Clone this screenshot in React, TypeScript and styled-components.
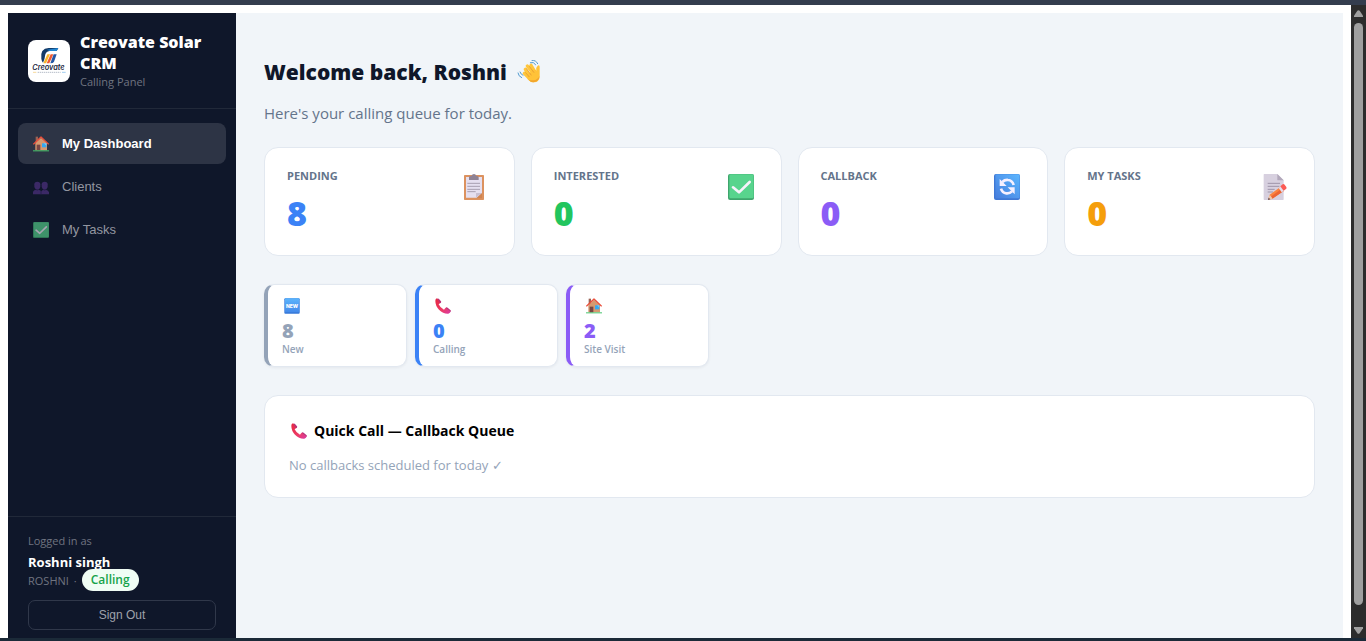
import React from "react";
import styled, { createGlobalStyle } from "styled-components";

const ui = `"Open Sans", "Noto Sans", sans-serif`;
const arial = `"Liberation Sans", Arial, sans-serif`;

const GlobalStyle = createGlobalStyle`
  *, *::before, *::after { box-sizing: border-box; }
  body { margin: 0; background: #ffffff; font-family: ${ui}; color: #000000; }
  h1, h2, p { margin: 0; padding: 0; }
`;

const Frame = styled.div`
  display: flex;
  flex-direction: column;
  height: 100vh;
  border-top: 5px solid #343d4e;
  border-bottom: 3px solid #1b2a38;
`;

const Viewport = styled.div`
  display: flex;
  flex: 1;
  min-height: 0;
`;

const Page = styled.div`
  display: flex;
  flex: 1;
  min-width: 0;
  padding: 8px 8px 0;
`;

const ScrollTrack = styled.div`
  display: flex;
  flex-direction: column;
  align-items: center;
  justify-content: space-between;
  width: 15px;
  padding: 5px 0 4px;
  background: #2c2c2c;
`;

const ScrollThumb = styled.div`
  flex: 1;
  width: 9px;
  margin: 6px 0 22px;
  border-radius: 5px;
  background: #9f9f9f;
`;

const Sidebar = styled.aside`
  display: flex;
  flex-direction: column;
  flex: none;
  width: 228px;
  background: #0f172a;
`;

const Brand = styled.div`
  display: flex;
  align-items: center;
  gap: 10px;
  padding: 19px 20px 18px;
  border-bottom: 1px solid #212939;
`;

const LogoTile = styled.svg`
  flex: none;
  width: 42px;
  height: 42px;
  border-radius: 8px;
  background: #ffffff;
`;

const BrandName = styled.div`
  color: #ffffff;
  font-size: 16px;
  font-weight: 800;
  line-height: 21px;
`;

const Muted = styled.div`
  color: #6f7480;
  font-size: 11px;
  line-height: 16px;
`;

const Nav = styled.nav`
  display: flex;
  flex: 1;
  flex-direction: column;
  gap: 2px;
  padding: 14px 10px;
`;

const NavButton = styled.button<{ $active?: boolean }>`
  display: flex;
  align-items: center;
  gap: 13px;
  height: 41px;
  padding: 0 15px;
  border: 0;
  border-radius: 8px;
  background: ${(p) => (p.$active ? "#2d3445" : "transparent")};
  color: ${(p) => (p.$active ? "#ffffff" : "#9396a0")};
  font-family: ${arial};
  font-size: 13px;
  font-weight: ${(p) => (p.$active ? 700 : 400)};
  text-align: left;
  cursor: pointer;

  svg { opacity: ${(p) => (p.$active ? 1 : 0.65)}; }
`;

const Account = styled.div`
  padding: 16px 20px 8px;
  border-top: 1px solid #212939;
`;

const UserName = styled.div`
  margin-top: 4px;
  color: #ffffff;
  font-size: 13px;
  font-weight: 700;
  line-height: 18px;
`;

const UserRole = styled.div`
  display: flex;
  align-items: center;
  gap: 5px;
  height: 18px;
  color: #6f7480;
  font-size: 11px;
`;

const Badge = styled.span`
  padding: 0 9px;
  border-radius: 11px;
  background: #f0fdf4;
  color: #16a34a;
  font-size: 12px;
  font-weight: 600;
  line-height: 22px;
`;

const SignOut = styled.button`
  width: 100%;
  height: 30px;
  margin-top: 11px;
  border: 1px solid #30384a;
  border-radius: 7px;
  background: transparent;
  color: #9fa2aa;
  font-family: ${arial};
  font-size: 12px;
  cursor: pointer;
`;

const Main = styled.main`
  flex: 1;
  min-width: 0;
  padding: 42px 28px 28px;
  background: #f1f5f9;
`;

const Title = styled.h1`
  display: flex;
  align-items: center;
  gap: 10px;
  color: #0f172a;
  font-size: 21px;
  font-weight: 800;
  line-height: 34px;
`;

const Subtitle = styled.p`
  margin-top: 12px;
  color: #64748b;
  font-size: 15px;
  line-height: 24px;
`;

const Stats = styled.section`
  display: grid;
  grid-template-columns: repeat(4, 1fr);
  gap: 16px;
  margin-top: 22px;
`;

const StatCard = styled.article`
  display: flex;
  justify-content: space-between;
  height: 109px;
  padding: 20px 22px;
  border: 1px solid #e2e8f0;
  border-radius: 14px;
  background: #ffffff;
`;

const StatLabel = styled.div`
  color: #64748b;
  font-size: 11px;
  font-weight: 700;
  line-height: 16px;
`;

const StatValue = styled.div<{ $color: string }>`
  margin-top: 8px;
  color: ${(p) => p.$color};
  font-size: 34px;
  font-weight: 800;
  line-height: 42px;
`;

const StatIcon = styled.div`
  display: flex;
  justify-content: center;
  width: 36px;
  padding-top: 6px;
`;

const Stages = styled.section`
  display: grid;
  grid-template-columns: repeat(auto-fill, 143px);
  gap: 8px;
  margin-top: 28px;
`;

const StageCard = styled.article<{ $color: string }>`
  height: 83px;
  padding: 13px 14px 8px;
  border: 1px solid #e2e8f0;
  border-left: 4px solid ${(p) => p.$color};
  border-radius: 10px;
  background: #ffffff;
  box-shadow: 0 1px 3px rgba(15, 23, 42, 0.06);

  svg { display: block; margin-left: 2px; }
`;

const StageValue = styled.div<{ $color: string }>`
  margin-top: 4px;
  color: ${(p) => p.$color};
  font-size: 20px;
  font-weight: 800;
  line-height: 26px;
`;

const StageLabel = styled.div`
  color: #94a3b8;
  font-size: 10px;
  font-weight: 600;
  line-height: 11px;
`;

const Queue = styled.section`
  margin-top: 28px;
  padding: 25px 24px 22px;
  border: 1px solid #e2e8f0;
  border-radius: 14px;
  background: #ffffff;
`;

const QueueTitle = styled.h2`
  display: flex;
  align-items: center;
  gap: 7px;
  padding-left: 2px;
  font-size: 14px;
  font-weight: 700;
  line-height: 20px;
`;

const QueueEmpty = styled.p`
  margin-top: 14px;
  color: #94a3b8;
  font-size: 13px;
  line-height: 20px;
`;

const Logo = () => (
  <LogoTile viewBox="0 0 126 126" role="img" aria-label="Creovate">
    <path d="M40 56Q36 25 62 24L91 24L86 33L65 33Q52 34 51 48Q51 55 45 68Q41 64 40 56Z" fill="#123a68" />
    <path d="M57 29L91 24L86 33L65 33Z" fill="#2186d2" />
    <path d="M46 70L58 43H66L54 70Z" fill="#f8b52c" />
    <path d="M56 70L68 43H76L64 70Z" fill="#f05a32" />
    <path d="M67 70L77 43H86L78 65Q76 70 67 70Z" fill="#2456a5" />
    <text x="13" y="90" fontFamily="Inter, sans-serif" fontSize="22" fontStyle="italic" fontWeight="600" fill="#17243c">Creovate</text>
    <path d="M15 97H25" stroke="#f4c76a" strokeWidth="2" />
    <path d="M29 97H98" stroke="#b6bdc8" strokeWidth="3" strokeDasharray="4 2" />
    <path d="M102 97H113" stroke="#70b4e8" strokeWidth="2" />
  </LogoTile>
);

const House = () => (
  <svg width="16" height="16" viewBox="0 0 48 48" aria-hidden="true">
    <path d="M8 2H15V20H8Z" fill="#9a6254" />
    <path d="M7 21L24 5L42 21V43H7Z" fill="#d69a70" />
    <path d="M1 25L24 3L47 25" fill="none" stroke="#ea4f3c" strokeWidth="4" strokeLinejoin="round" />
    <path d="M11 26H22V43H11Z" fill="#774745" />
    <path d="M27 22H40V34H27Z" fill="#35a9f2" />
    <path d="M33 22H40V29Z" fill="#70cdfb" />
    <path d="M0 43H48V46H0Z" fill="#46c46c" />
  </svg>
);

const People = () => (
  <svg width="16" height="16" viewBox="0 0 48 48" aria-hidden="true">
    <g fill="#533487">
      <path d="M4 16Q4 8 13 8T22 16V24Q20 32 13 32T4 24Z" />
      <path d="M26 16Q26 8 35 8T44 16V24Q42 32 35 32T26 24Z" />
      <path d="M0 46V39Q2 32 13 32T24 38Q26 32 35 32T48 39V46Z" />
    </g>
    <path d="M8 31Q13 36 18 31M30 31Q35 36 40 31M24 37V46" fill="none" stroke="#35225e" strokeWidth="3" />
  </svg>
);

const Check = ({ size }: { size: number }) => (
  <svg width={size} height={size} viewBox="0 0 78 78" aria-hidden="true">
    <rect width="78" height="78" rx="6" fill="#3fa56d" />
    <rect x="4" y="1" width="73" height="72" rx="4" fill="#58d48d" />
    <path d="M15 40L33 55L65 24" fill="none" stroke="#f8f2fb" strokeWidth="8" strokeLinecap="round" strokeLinejoin="round" />
  </svg>
);

const Clipboard = () => (
  <svg width="26" height="26" viewBox="0 0 78 78" aria-hidden="true">
    <rect x="9" y="3" width="60" height="75" rx="2" fill="#dc925f" />
    <path d="M15 9H63V57L48 71H15Z" fill="#e5dff0" />
    <path d="M45 71V57H63Z" fill="#c8bfd2" />
    <path d="M63 58V73H46Z" fill="#cf8452" />
    <path d="M24 18V10Q24 5 32 5Q33 0 39 0T45 5Q53 5 53 10V18Z" fill="#8f8294" />
    <path d="M19 28H57M19 37H57M19 46H57M19 53H44" stroke="#a79eb0" strokeWidth="3" />
  </svg>
);

const Refresh = () => (
  <svg width="26" height="26" viewBox="0 0 78 78" aria-hidden="true">
    <defs>
      <linearGradient id="refresh" x1="0" y1="1" x2="1" y2="0">
        <stop stopColor="#467ddd" />
        <stop offset="1" stopColor="#5db7ff" />
      </linearGradient>
    </defs>
    <rect width="78" height="78" rx="6" fill="#3f78d5" />
    <rect x="4" y="1" width="73" height="72" rx="4" fill="url(#refresh)" />
    <path d="M25 24Q32 17 42 18Q55 19 59 33M54 52Q47 59 37 58Q25 57 21 44" fill="none" stroke="#f6f0ff" strokeWidth="8" />
    <path d="M17 15V36H38ZM62 61V40H41Z" fill="#f6f0ff" />
  </svg>
);

const Memo = () => (
  <svg width="26" height="26" viewBox="0 0 78 78" aria-hidden="true">
    <path d="M8 2Q8 0 10 0H49L68 19V76Q68 78 66 78H10Q8 78 8 76Z" fill="#d7d0df" />
    <path d="M49 0L68 19H51Q49 19 49 17Z" fill="#b2a8bb" />
    <path d="M20 28H57M20 37H55M20 46H41M20 54H36" stroke="#9f95a9" strokeWidth="3" />
    <path d="M21 78L26 62L58 39L68 51L34 74Z" fill="#fb8440" />
    <path d="M29 68L62 44L68 51L34 74Z" fill="#ec6534" />
    <path d="M21 78L26 62L35 74Z" fill="#f0c7a8" />
    <path d="M21 78L23 71L28 76Z" fill="#534451" />
    <path d="M53 42L59 38L69 50L62 55Z" fill="#e5dcec" />
    <path d="M58 37L65 31Q68 29 71 32L76 39Q78 43 75 45L68 50Z" fill="#fb5b55" />
  </svg>
);

const NewSign = () => (
  <svg width="16" height="16" viewBox="0 0 48 48" aria-hidden="true">
    <defs>
      <linearGradient id="newsign" x1="0" y1="0" x2="0" y2="1">
        <stop stopColor="#5bb4fc" />
        <stop offset="1" stopColor="#4389ea" />
      </linearGradient>
    </defs>
    <rect x="1" y="1" width="46" height="46" rx="3" fill="#3678d8" />
    <rect x="3" y="1" width="43" height="42" rx="2" fill="url(#newsign)" />
    <text x="24" y="30" textAnchor="middle" fontFamily="Inter, sans-serif" fontSize="15" fontWeight="800" fill="#ffffff">NEW</text>
  </svg>
);

const Phone = () => (
  <svg width="16" height="16" viewBox="0 0 48 48" aria-hidden="true">
    <defs>
      <linearGradient id="phone" x1="0" y1="0" x2="1" y2="1">
        <stop stopColor="#e5263f" />
        <stop offset="0.6" stopColor="#ed3c68" />
        <stop offset="1" stopColor="#d83aa6" />
      </linearGradient>
    </defs>
    <path d="M1 8Q1 2 6 1L16 11Q19 14 15 16L11 19Q15 29 27 35L31 30Q34 28 37 31L47 40Q46 45 40 47Q25 48 12 35Q1 23 1 8Z" fill="url(#phone)" />
    <path d="M7 2Q10 0 12 3L18 10Q20 14 15 16ZM32 29Q35 26 38 29L46 36Q49 39 47 41Z" fill="#b83278" />
  </svg>
);

const Wave = () => (
  <svg width="24" height="24" viewBox="0 0 72 72" aria-hidden="true">
    <path d="M40 8Q50 4 56 14M45 1Q57 0 62 11M3 39Q4 49 14 53M9 36Q11 43 18 46" fill="none" stroke="#529bcf" strokeWidth="3" strokeLinecap="round" />
    <path d="M25 28L41 51M31 18L50 42M42 16L56 39M22 40L40 58" fill="none" stroke="#ffc63c" strokeWidth="10" strokeLinecap="round" />
    <path d="M32 45L50 27Q57 30 58 32Q56 22 62 17Q67 14 68 20V47Q68 66 50 67Q41 68 32 58Z" fill="#ffc238" />
    <path d="M28 25L43 46M37 19L51 38M25 37L37 51" fill="none" stroke="#df9130" strokeWidth="2" />
    <path d="M36 61Q43 69 53 66Q67 62 68 47Q61 60 50 61Z" fill="#f2a52e" />
  </svg>
);

const Arrow = ({ down }: { down?: boolean }) => (
  <svg width="9" height="7" viewBox="0 0 27 21" aria-hidden="true">
    <path d={down ? "M0 0H27V4L17 19Q13 22 10 19L0 4Z" : "M0 21H27V17L17 2Q13-1 10 2L0 17Z"} fill="#9f9f9f" />
  </svg>
);

const stats = [
  { label: "PENDING", value: 8, color: "#3b82f6", icon: <Clipboard /> },
  { label: "INTERESTED", value: 0, color: "#22c55e", icon: <Check size={26} /> },
  { label: "CALLBACK", value: 0, color: "#8b5cf6", icon: <Refresh /> },
  { label: "MY TASKS", value: 0, color: "#f59e0b", icon: <Memo /> },
];

const stages = [
  { label: "New", value: 8, color: "#94a3b8", icon: <NewSign /> },
  { label: "Calling", value: 0, color: "#3b82f6", icon: <Phone /> },
  { label: "Site Visit", value: 2, color: "#8b5cf6", icon: <House /> },
];

export default function App() {
  return (
    <Frame>
      <GlobalStyle />
      <Viewport>
        <Page>
          <Sidebar>
            <Brand>
              <Logo />
              <div>
                <BrandName>Creovate Solar CRM</BrandName>
                <Muted>Calling Panel</Muted>
              </div>
            </Brand>
            <Nav>
              <NavButton type="button" $active aria-current="page"><House />My Dashboard</NavButton>
              <NavButton type="button"><People />Clients</NavButton>
              <NavButton type="button"><Check size={16} />My Tasks</NavButton>
            </Nav>
            <Account>
              <Muted>Logged in as</Muted>
              <UserName>Roshni singh</UserName>
              <UserRole>
                <span>ROSHNI</span>
                <span>·</span>
                <Badge>Calling</Badge>
              </UserRole>
              <SignOut type="button">Sign Out</SignOut>
            </Account>
          </Sidebar>
          <Main>
            <Title>Welcome back, Roshni <Wave /></Title>
            <Subtitle>Here's your calling queue for today.</Subtitle>
            <Stats>
              {stats.map((s) => (
                <StatCard key={s.label}>
                  <div>
                    <StatLabel>{s.label}</StatLabel>
                    <StatValue $color={s.color}>{s.value}</StatValue>
                  </div>
                  <StatIcon>{s.icon}</StatIcon>
                </StatCard>
              ))}
            </Stats>
            <Stages>
              {stages.map((s) => (
                <StageCard key={s.label} $color={s.color}>
                  {s.icon}
                  <StageValue $color={s.color}>{s.value}</StageValue>
                  <StageLabel>{s.label}</StageLabel>
                </StageCard>
              ))}
            </Stages>
            <Queue>
              <QueueTitle><Phone />Quick Call — Callback Queue</QueueTitle>
              <QueueEmpty>No callbacks scheduled for today ✓</QueueEmpty>
            </Queue>
          </Main>
        </Page>
        <ScrollTrack aria-hidden="true">
          <Arrow />
          <ScrollThumb />
          <Arrow down />
        </ScrollTrack>
      </Viewport>
    </Frame>
  );
}
